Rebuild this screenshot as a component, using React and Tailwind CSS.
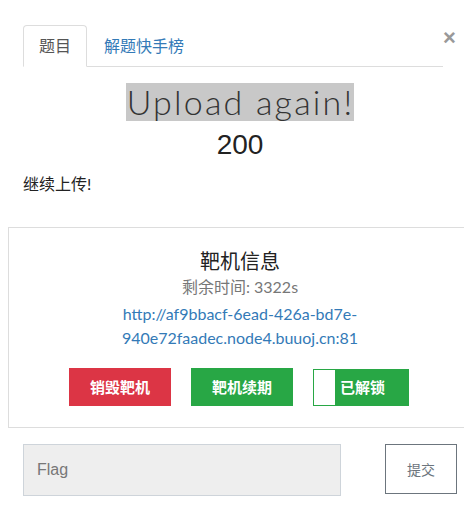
export default function App() {
  const cjk = { fontFamily: '"Lato", "Noto Sans CJK SC", sans-serif' };
  return (
    <div
      className="w-[464px] h-[525px] bg-white overflow-hidden text-[#333]"
      style={cjk}
    >
      {/* Header with tabs */}
      <div className="flex items-start pl-[23px] pt-[25px]">
        <div className="flex w-[420px] border-b border-[#ddd] h-[42px]">
          <div className="h-[42px] px-[15px] border border-[#ddd] border-b-white rounded-t-[4px] bg-white flex items-center text-[16px] text-[#555]">
            题目
          </div>
          <div className="h-[41px] ml-[2px] px-[15px] flex items-center text-[16px] text-[#337ab7]">
            解题快手榜
          </div>
        </div>
        <div className="-ml-[2px] mt-[2px] w-[17px] text-center text-[22px] leading-[22px] font-bold text-[#999]" style={{ fontFamily: '"Liberation Sans", sans-serif' }}>
          ×
        </div>
      </div>

      {/* Body */}
      <div className="pl-[23px] w-[457px]">
        <div className="text-center mt-[16px] h-[38px]">
          <span
            className="inline-block bg-[#c8c8c8] text-[34px] leading-[38px] font-light tracking-[2.2px] pl-[1px] text-[#333]"
            style={{ fontFamily: '"Lato", sans-serif' }}
          >
            Upload again!
          </span>
        </div>
        <div
          className="text-center text-[28px] leading-[48px] text-[#222]"
          style={{ fontFamily: '"Liberation Sans", sans-serif' }}
        >
          200
        </div>
        <div className="text-[16px] leading-[22px] mt-[4px] text-[#222]">继续上传!</div>
      </div>

      {/* Card */}
      <div className="ml-[8px] mt-[32px] w-[464px] h-[201px] border border-[#ddd] px-[20px] pt-[19px] text-center">
        <div className="text-[20px] leading-[28px] text-[#222]">靶机信息</div>
        <div className="text-[16px] leading-[22px] text-[#777] mt-[1px]">剩余时间: 3322s</div>
        <div className="mx-auto w-[250px] text-[16px] leading-[24px] text-[#337ab7] mt-[4px] break-words">
          http://af9bbacf-6ead-426a-bd7e-940e72faadec.node4.buuoj.cn:81
        </div>
        <div className="flex justify-center gap-[20px] mt-[18px] pr-[2px]">
          <div className="w-[102px] h-[38px] bg-[#dc3545] text-white font-bold text-[15px] flex items-center justify-center">
            销毁靶机
          </div>
          <div className="w-[102px] h-[38px] bg-[#28a745] text-white font-bold text-[15px] flex items-center justify-center">
            靶机续期
          </div>
          <div className="w-[96px] h-[37px] mt-[1px] bg-[#28a745] border border-[#28a745] flex items-stretch">
            <div className="w-[21px] bg-white"></div>
            <div className="flex-1 text-white font-bold text-[15px] flex items-center pl-[5px]">
              已解锁
            </div>
          </div>
        </div>
      </div>

      {/* Flag input */}
      <div className="flex items-start pl-[23px] mt-[16px]">
        <div className="w-[318px] h-[52px] bg-[#eee] border border-[#ced4da] flex items-center pl-[13px] text-[16px] text-[#777]" style={{ fontFamily: '"Liberation Sans", "Noto Sans CJK SC", sans-serif' }}>
          Flag
        </div>
        <div className="ml-[44px] w-[72px] h-[50px] border border-[#6c757d] flex items-center justify-center text-[14px] text-[#6c757d]">
          提交
        </div>
      </div>
    </div>
  );
}
